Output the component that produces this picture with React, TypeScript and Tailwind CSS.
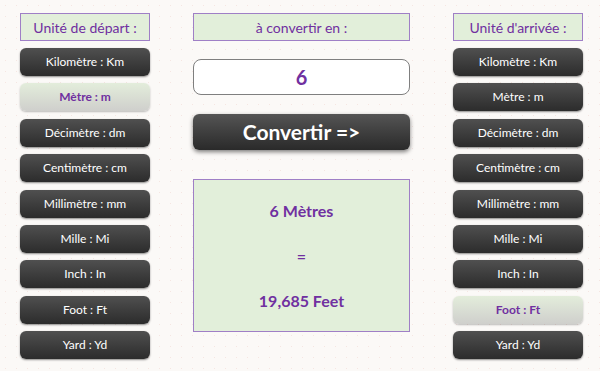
const units = [
  'Kilomètre : Km',
  'Mètre : m',
  'Décimètre : dm',
  'Centimètre : cm',
  'Millimètre : mm',
  'Mille : Mi',
  'Inch : In',
  'Foot : Ft',
  'Yard : Yd',
];

function UnitButton({ label, active }: { label: string; active?: boolean }) {
  return active ? (
    <div className="h-[28px] rounded-[6px] bg-gradient-to-b from-[#e3eddb] to-[#cfcfcc] flex items-center justify-center text-[12px] font-bold text-[#7030a0] shadow-[0_1px_2px_rgba(0,0,0,0.25)]">
      {label}
    </div>
  ) : (
    <div className="h-[28px] rounded-[6px] bg-gradient-to-b from-[#505050] to-[#2c2c2c] flex items-center justify-center text-[12px] text-white shadow-[0_1px_2px_rgba(0,0,0,0.45)]">
      {label}
    </div>
  );
}

function Header({ children }: { children: string }) {
  return (
    <div className="h-[28px] border border-[#9f7fc6] bg-[#e2efda] flex items-center justify-center text-[14px] text-[#7030a0]">
      {children}
    </div>
  );
}

function UnitColumn({ title, active }: { title: string; active: number }) {
  return (
    <div className="w-[130px] flex flex-col">
      <Header>{title}</Header>
      <div className="mt-[7px] flex flex-col gap-[7.4px]">
        {units.map((u, i) => (
          <UnitButton key={u} label={u} active={i === active} />
        ))}
      </div>
    </div>
  );
}

export default function App() {
  return (
    <div
      className="w-[600px] h-[371px] overflow-hidden bg-[#fbf9f7] bg-[radial-gradient(#f5e6e2_0.8px,transparent_1px)] bg-[length:11px_11px] pt-[13px] pl-[20px] flex"
      style={{ fontFamily: 'Lato, "Open Sans", sans-serif' }}
    >
      <UnitColumn title="Unité de départ :" active={1} />

      <div className="ml-[43px] w-[217px] flex flex-col">
        <Header>à convertir en :</Header>
        <div className="mt-[18px] h-[36px] rounded-[8px] border border-[#7f7f7f] bg-white flex items-center justify-center text-[20px] font-bold text-[#7030a0]">
          6
        </div>
        <div className="mt-[19px] h-[36px] rounded-[6px] bg-gradient-to-b from-[#555555] to-[#2a2a2a] flex items-center justify-center text-[21px] font-bold text-white shadow-[0_2px_4px_rgba(0,0,0,0.5)]">
          Convertir =&gt;
        </div>
        <div className="mt-[29px] h-[153px] border border-[#9f7fc6] bg-[#e2efda] flex flex-col items-center justify-center gap-[21px] text-[16px] font-bold text-[#7030a0]">
          <span>6 Mètres</span>
          <span>=</span>
          <span>19,685 Feet</span>
        </div>
      </div>

      <div className="ml-[43px]">
        <UnitColumn title="Unité d'arrivée :" active={7} />
      </div>
    </div>
  );
}
